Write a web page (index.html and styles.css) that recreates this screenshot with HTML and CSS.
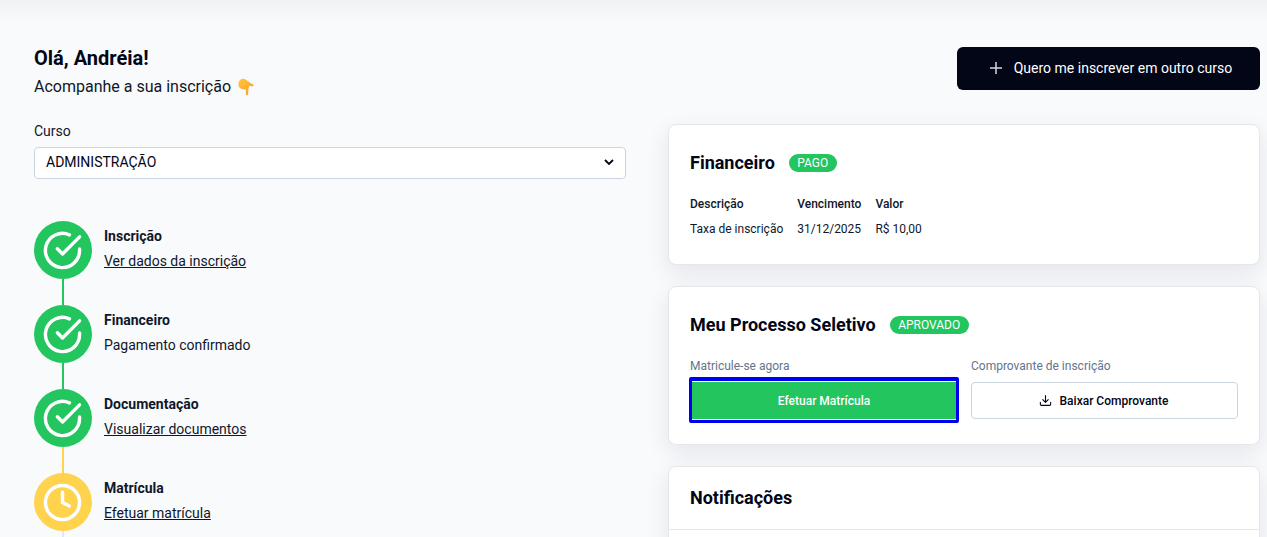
FILE: index.html
```html
<!DOCTYPE html>
<html lang="pt-BR">
<head>
<meta charset="utf-8">
<title>Acompanhe a sua inscrição</title>
<link rel="stylesheet" href="styles.css">
</head>
<body>
<div class="page">
  <header class="top">
    <div class="greeting">
      <h1>Olá, Andréia!</h1>
      <p class="sub">Acompanhe a sua inscrição
        <svg class="hand" viewBox="0 0 16 18"><defs><linearGradient id="h" x1="0" y1="0" x2="1" y2="1"><stop offset="0" stop-color="#ffc73c"/><stop offset="1" stop-color="#fb9a2e"/></linearGradient></defs><path fill="url(#h)" d="M.4 6C.5 2.800 2.600.6 5.200.7c1.700 0 3.100 1 4.300 2.200l3.800 2.700c1.100.5 2.400 1.100 2.300 2-.1.800-1.400.9-2.500.6l-2-.4c-.1 1.300-.3 2.100-.7 2.900l-.2 4.700c-.1 1.100-.5 1.800-1.200 1.800-.8 0-1.100-.8-1.100-1.800l-.2-3.900C4.900 11.600 2.900 11.200 1.700 9.800.8 8.800.3 7.400.4 6z"/></svg>
      </p>
    </div>
    <button class="btn-dark" type="button">
      <svg class="plus" viewBox="0 0 12 12"><path d="M6 0v12M0 6h12"/></svg>
      Quero me inscrever em outro curso
    </button>
  </header>

  <main class="columns">
    <section class="left">
      <label class="course-label">Curso</label>
      <div class="select">
        <span>ADMINISTRAÇÃO</span>
        <svg class="chev" viewBox="0 0 10 6"><path d="M1 1l4 4 4-4"/></svg>
      </div>

      <ol class="steps">
        <li class="step green">
          <div class="rail">
            <span class="dot"><svg viewBox="0 0 24 24"><path d="M22 11.080V12a10 10 0 1 1-5.930-9.140"/><path d="M22 4 12 14.010l-3-3"/></svg></span>
            <span class="line"></span>
          </div>
          <div class="info"><strong>Inscrição</strong><a href="#">Ver dados da inscrição</a></div>
        </li>
        <li class="step green">
          <div class="rail">
            <span class="dot"><svg viewBox="0 0 24 24"><path d="M22 11.080V12a10 10 0 1 1-5.930-9.140"/><path d="M22 4 12 14.010l-3-3"/></svg></span>
            <span class="line"></span>
          </div>
          <div class="info"><strong>Financeiro</strong><span>Pagamento confirmado</span></div>
        </li>
        <li class="step green next-yellow">
          <div class="rail">
            <span class="dot"><svg viewBox="0 0 24 24"><path d="M22 11.080V12a10 10 0 1 1-5.930-9.140"/><path d="M22 4 12 14.010l-3-3"/></svg></span>
            <span class="line"></span>
          </div>
          <div class="info"><strong>Documentação</strong><a href="#">Visualizar documentos</a></div>
        </li>
        <li class="step yellow">
          <div class="rail">
            <span class="dot"><svg viewBox="0 0 24 24"><circle cx="12" cy="12" r="10"/><path d="M12 6v6l4 2"/></svg></span>
            <span class="line"></span>
          </div>
          <div class="info"><strong>Matrícula</strong><a href="#">Efetuar matrícula</a></div>
        </li>
      </ol>
    </section>

    <section class="right">
      <article class="card fin">
        <div class="card-head"><h2>Financeiro</h2><span class="badge">PAGO</span></div>
        <table class="fin-table">
          <thead><tr><th>Descrição</th><th>Vencimento</th><th>Valor</th></tr></thead>
          <tbody><tr><td>Taxa de inscrição</td><td>31/12/2025</td><td>R$ 10,00</td></tr></tbody>
        </table>
      </article>

      <article class="card proc">
        <div class="card-head"><h2>Meu Processo Seletivo</h2><span class="badge">APROVADO</span></div>
        <div class="actions">
          <div class="action">
            <span class="action-label">Matricule-se agora</span>
            <button class="btn btn-green" type="button">Efetuar Matrícula</button>
          </div>
          <div class="action">
            <span class="action-label">Comprovante de inscrição</span>
            <button class="btn btn-outline" type="button">
              <svg class="dl" viewBox="0 0 24 24"><path d="M12 3v12M7 10.500l5 5 5-5M2.500 15.500v3.500a2 2 0 0 0 2 2h15a2 2 0 0 0 2-2v-3.500"/></svg>
              Baixar Comprovante
            </button>
          </div>
        </div>
      </article>

      <article class="card notif">
        <h2>Notificações</h2>
      </article>
    </section>
  </main>
</div>
</body>
</html>
```
FILE: styles.css
```css
* { box-sizing: border-box; }
html, body { margin: 0; height: 537px; overflow: hidden; }
body {
  font-family: Roboto, "Liberation Sans", sans-serif;
  color: #0f172a;
  background: linear-gradient(#f1f2f4 0, #f9fafc 24px, #f9fafc 100%);
}
.page { padding: 47px 7px 0 34px; }

.top { display: flex; justify-content: space-between; align-items: flex-start; height: 77px; }
h1 { margin: 0; font-size: 20px; line-height: 22px; font-weight: 700; color: #020617; }
.sub { margin: 7px 0 0; font-size: 16px; line-height: 22px; color: #0f172a; display: flex; align-items: center; gap: 7px; }
.hand { width: 16px; height: 18px; }
.btn-dark {
  width: 303px; height: 43px; padding: 0 0 2px 5px;
  display: flex; align-items: center; justify-content: center; gap: 12px;
  background: #020617; color: #fff; border: 0; border-radius: 6px;
  font: 400 14px Roboto, sans-serif;
}
.plus { width: 12px; height: 12px; fill: none; stroke: #d5d8dd; stroke-width: 1.500; }

.columns { display: grid; grid-template-columns: 592px 592px; column-gap: 42px; }

.course-label { display: block; font-size: 14px; line-height: 14px; color: #0f172a; }
.select {
  margin-top: 9px; height: 32px; padding: 0 11px 2px;
  display: flex; align-items: center; justify-content: space-between;
  background: #fff; border: 1px solid #cbd5e1; border-radius: 4px;
  font-size: 14px; color: #020617;
}
.chev { width: 10px; height: 6px; fill: none; stroke: #020617; stroke-width: 1.800; }

.steps { list-style: none; margin: 42px 0 0; padding: 0; }
.step { display: flex; gap: 12px; height: 84px; }
.rail { width: 58px; display: flex; flex-direction: column; align-items: center; }
.dot { width: 58px; height: 58px; flex: none; border-radius: 50%; padding-right: 2px; display: flex; align-items: center; justify-content: center; }
.dot svg { width: 41px; height: 41px; fill: none; stroke: #fff; stroke-width: 2; stroke-linecap: round; stroke-linejoin: round; }
.line { width: 2px; height: 26px; flex: none; }
.green .dot { background: #22c55e; }
.green .line { background: #22c55e; }
.next-yellow .line { background: #ffd34e; }
.yellow .dot { background: #ffd34e; }
.yellow .line { background: #e5e7eb; }
.info { display: flex; flex-direction: column; padding-top: 6px; font-size: 14px; line-height: 18px; gap: 7px; }
.info strong { font-weight: 700; color: #0f172a; }
.info a { color: #0f172a; text-decoration: underline; }

.card {
  background: #fff; border: 1px solid #e5e7eb; border-radius: 8px;
  box-shadow: 0 8px 24px rgba(15, 23, 42, .09);
  margin-bottom: 21px;
}
.fin { height: 141px; padding: 27px 21px 0; }
.proc { height: 159px; padding: 27px 21px 0; }
.notif { height: 200px; padding: 20px 21px 0; position: relative; }
.notif::after { content: ""; position: absolute; left: 0; right: 0; top: 62px; border-top: 1px solid #e5e7eb; }
h2 { margin: 0; font-size: 18px; line-height: 22px; font-weight: 700; color: #020617; }
.card-head { display: flex; align-items: center; gap: 14px; }
.badge {
  height: 18px; padding: 0 8.500px; border-radius: 9px;
  background: #22c55e; color: #fff; font-size: 12px; line-height: 18px; font-weight: 400;
}
.fin-table { margin-top: 21px; border-collapse: collapse; font-size: 12px; color: #0f172a; }
.fin-table th { padding: 0 14px 0 0; text-align: left; font-weight: 500; height: 18px; }
.fin-table td { padding: 7px 14px 0 0; height: 25px; line-height: 18px; }

.actions { display: grid; grid-template-columns: 268px 1fr; column-gap: 13px; margin-top: 23px; }
.action { display: flex; flex-direction: column; }
.action-label { font-size: 12px; line-height: 14px; color: #64748b; margin-bottom: 9px; }
.btn {
  height: 37px; border-radius: 4px; font: 500 12px Roboto, sans-serif;
  display: flex; align-items: center; justify-content: center; gap: 8px;
}
.btn-green {
  height: 46px; margin: -5px -1px -4px; background: #22c55e; color: #fff;
  border: 3px solid #0000f0; border-top-width: 4px; border-radius: 2px;
  box-shadow: inset 0 1px 0 #fff, inset 0 -1px 0 #fff;
}
.btn-outline { background: #fff; color: #020617; border: 1px solid #cbd5e1; padding-right: 8px; }
.dl { width: 13px; height: 13px; fill: none; stroke: #020617; stroke-width: 2; stroke-linecap: round; stroke-linejoin: round; }
```
